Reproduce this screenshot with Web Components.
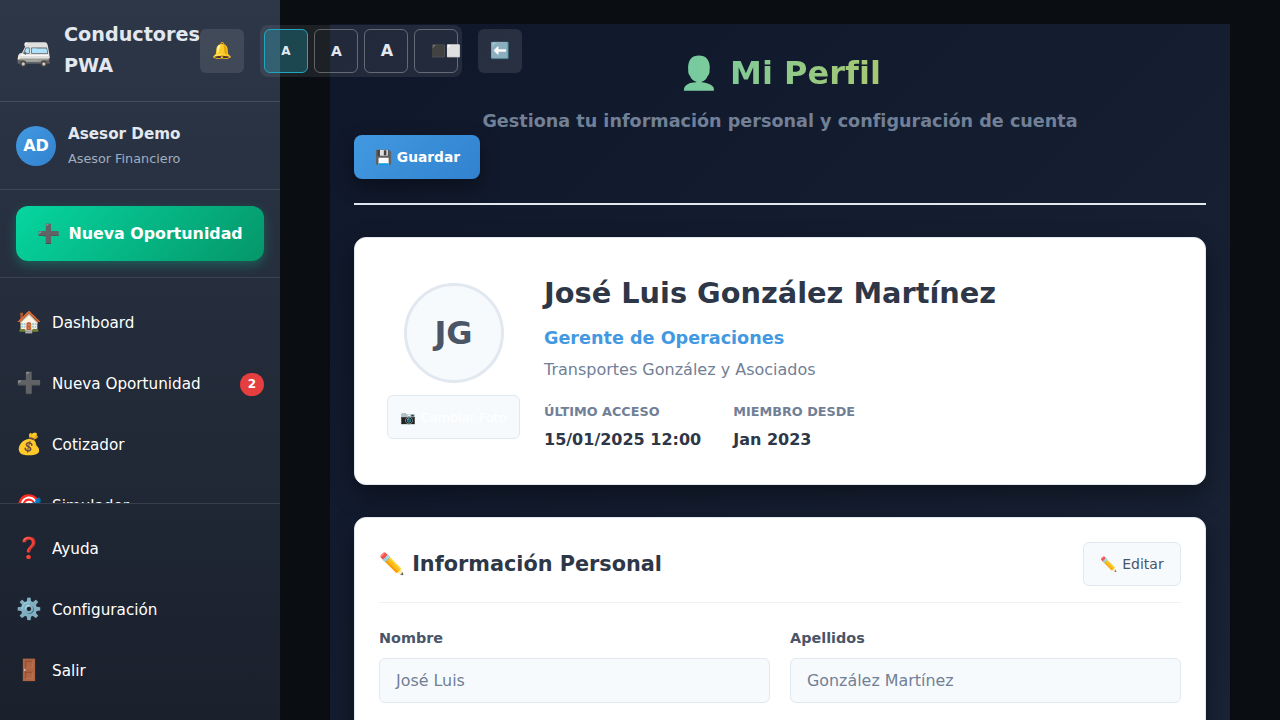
<!DOCTYPE html>
<html lang="es">
<head>
<meta charset="utf-8">
<title>Conductores PWA</title>
<style>
html,body{margin:0;height:100%;overflow:hidden}
body{font-family:"DejaVu Sans","Noto Color Emoji",sans-serif;font-size:16px;line-height:1.6;color:#e2e8f0;background:#0a0e12}
</style>
</head>
<body>
<app-shell>
  <side-bar slot="side"></side-bar>
  <profile-page></profile-page>
</app-shell>
<script>
const define=(name,html)=>{
  const t=document.createElement('template');
  t.innerHTML='<style>*{box-sizing:border-box}</style>'+html;
  customElements.define(name,class extends HTMLElement{
    constructor(){
      super();
      this.attachShadow({mode:'open'}).append(t.content.cloneNode(true));
    }
  });
};

define('app-shell',`<style>
:host{display:flex;height:720px;width:1280px;overflow:hidden;background:#0a0e12}
main{flex:1;min-width:0;padding:24px 50px 0;overflow:hidden}
</style><slot name="side"></slot><main><slot></slot></main>`);

define('tool-button',`<style>
:host{display:flex;align-items:center;justify-content:center;width:44px;height:44px;border-radius:6px;background:rgba(255,255,255,.1);font-size:16px;flex:none;box-sizing:border-box;white-space:nowrap}
</style><slot></slot>`);

define('size-button',`<style>
:host{display:flex;align-items:center;justify-content:center;width:44px;height:44px;border-radius:6px;border:1px solid rgba(255,255,255,.3);font-weight:700;flex:none;box-sizing:border-box;white-space:nowrap;padding-top:1px}
:host([active]){background:rgba(30,170,195,.28);border-color:#22a6bf}
</style><slot></slot>`);

define('nav-item',`<style>
:host{display:flex;align-items:center;height:57px;margin-bottom:4px;padding:0 16px;gap:12px;font-size:15.2px;color:#fff;box-sizing:border-box}
i{font-style:normal;font-size:20.8px;width:24px;display:flex;justify-content:center;padding-left:2px}
span{flex:1}
</style><i><slot name="icon"></slot></i><span><slot></slot></span><slot name="badge"></slot>`);

define('count-badge',`<style>
:host{display:block;min-width:24px;height:23px;border-radius:12px;background:#e53e3e;color:#fff;font-size:12px;font-weight:700;line-height:22px;text-align:center;padding:0 6px;box-sizing:border-box;margin-top:2px}
</style><slot></slot>`);

define('side-bar',`<style>
:host{display:flex;flex-direction:column;width:280px;height:720px;flex:none;background:linear-gradient(180deg,#2d3748,#1a202c);position:relative;z-index:2}
header{display:flex;align-items:center;padding:20px 16px;border-bottom:1px solid #434c5b;height:102.4px;flex:none}
.van{font-size:28.8px;width:36px;margin-right:12px;display:flex;justify-content:center;flex:none}
h1{margin:0;font-size:19.2px;line-height:30.72px;font-weight:700;width:136px;flex:none}
.tools{display:flex;align-items:center;gap:16px;flex:none}
.sizes{display:flex;gap:6px;padding:4px;border-radius:8px;background:rgba(255,255,255,.08);height:52px;width:202px}
.user{display:flex;align-items:center;gap:12px;padding:20px 16px;height:87.8px;border-bottom:1px solid #3e4757;flex:none}
.av{width:40px;height:40px;border-radius:50%;background:linear-gradient(135deg,#4299e1,#3182ce);display:flex;align-items:center;justify-content:center;color:#fff;font-weight:700}
.nm{font-size:15.2px;font-weight:700;margin-bottom:2px}
.rl{font-size:12.8px;color:#a0aec0}
.cta{padding:16px;border-bottom:1px solid #3b4453;flex:none;height:88px}
.cta div{height:55px;border-radius:12px;background:linear-gradient(135deg,#06d6a0,#059669);box-shadow:0 4px 12px rgba(6,214,160,.3);display:flex;align-items:center;justify-content:center;gap:8px;color:#fff;font-weight:700;font-size:15.85px}
.cta i{font-style:normal;font-size:18.6px;padding-top:1px}
nav{flex:1;min-height:0;overflow:hidden;padding-top:16px}
footer{flex:none;height:217px;border-top:1px solid #373e4c;padding-top:16.6px}
</style>
<header><span class="van">🚐</span><h1>Conductores PWA</h1>
<div class="tools"><tool-button>🔔</tool-button>
<div class="sizes"><size-button active style="font-size:12px">A</size-button><size-button style="font-size:14px;padding-left:1px">A</size-button><size-button style="font-size:16px;padding-left:2px">A</size-button><size-button style="font-size:12px;padding-left:20px;padding-top:2px">⬛⬜</size-button></div>
<tool-button>⬅️</tool-button></div></header>
<div class="user"><div class="av">AD</div><div><div class="nm">Asesor Demo</div><div class="rl">Asesor Financiero</div></div></div>
<div class="cta"><div><i>➕</i><span>Nueva Oportunidad</span></div></div>
<nav>
<nav-item><span slot="icon">🏠</span>Dashboard</nav-item>
<nav-item><span slot="icon">➕</span>Nueva Oportunidad<count-badge slot="badge">2</count-badge></nav-item>
<nav-item><span slot="icon">💰</span>Cotizador</nav-item>
<nav-item><span slot="icon">🎯</span>Simulador</nav-item>
</nav>
<footer>
<nav-item><span slot="icon">❓</span>Ayuda</nav-item>
<nav-item><span slot="icon">⚙️</span>Configuración</nav-item>
<nav-item><span slot="icon">🚪</span>Salir</nav-item>
</footer>`);

define('white-card',`<style>
:host{display:block;background:#fff;border:1px solid #e2e8f0;border-radius:12px;box-shadow:0 10px 25px rgba(0,0,0,.4);box-sizing:border-box;color:#2d3748}
</style><slot></slot>`);

define('soft-button',`<style>
:host{display:inline-flex;align-items:center;justify-content:center;height:44px;border:1px solid #e2e8f0;border-radius:6px;background:#f7fafc;box-sizing:border-box;white-space:pre;flex:none;padding-top:1px}
</style><slot></slot>`);

define('text-field',`<style>
:host{display:block}
label{display:block;font-size:14.4px;font-weight:700;color:#4a5568;line-height:23px;margin-bottom:8px}
div{height:45px;border:1px solid #e2e8f0;border-radius:6px;background:#f7fafc;padding:0 16px;line-height:43px;font-size:15.9px;color:#718096}
</style><label><slot name="label"></slot></label><div><slot></slot></div>`);

define('profile-page',`<style>
:host{display:block;height:1400px;background:linear-gradient(135deg,#0f172a,#1e293b);padding:24px;box-sizing:border-box}
header{height:157px;border-bottom:2px solid #e2e8f0;margin-bottom:32px;text-align:center}
h1{font-size:32px;line-height:50px;font-weight:700;width:max-content;margin:0 auto;background:linear-gradient(90deg,#74cba2,#a8c873);-webkit-background-clip:text;background-clip:text;color:transparent}
p{margin:9px 0 0;font-size:17.6px;line-height:28px;font-weight:700;color:#718096}
.save{display:flex;align-items:center;justify-content:center;width:126px;height:44px;padding:1px 0 0 1px;border-radius:8px;background:linear-gradient(135deg,#4299e1,#3182ce);box-shadow:0 8px 20px rgba(0,0,0,.4);font-size:13.8px;font-weight:700;color:#fff;white-space:pre}
.profile{height:248px;margin-bottom:32px;padding:32px;display:flex;gap:24px}
.pic{width:133px;display:flex;flex-direction:column;align-items:center;gap:12px;padding-top:13px}
.jg{width:100px;height:100px;border:3px solid #e2e8f0;border-radius:50%;background:#f7fafc;display:flex;align-items:center;justify-content:center;font-size:32px;font-weight:700;color:#4a5568;padding-top:1px}
.pic soft-button{width:133px;font-size:12.8px;color:#fff;padding-top:2px}
h2{margin:0;font-size:28.8px;line-height:46px;font-weight:700}
.job{margin-top:8px;font-size:17.6px;line-height:28px;font-weight:700;color:#4299e1}
.co{margin-top:5px;line-height:26px;color:#718096}
.meta{display:flex;gap:32px;margin-top:19px}
.meta b{display:block;font-size:12.8px;line-height:20px;color:#718096}
.meta strong{display:block;line-height:26px;margin-top:5px}
.info{padding:24px;min-height:420px}
.top{display:flex;justify-content:space-between;height:61px;border-bottom:1px solid #edf2f7;margin-bottom:24px}
h3{margin:0;font-size:20.8px;line-height:44px;font-weight:700}
.top soft-button{width:98px;font-size:14px;color:#4a5568}
.grid{display:grid;grid-template-columns:1fr 1fr;gap:20px}
</style>
<header><h1>👤 Mi Perfil</h1><p>Gestiona tu información personal y configuración de cuenta</p><div class="save">💾 Guardar</div></header>
<white-card class="profile"><div class="pic"><div class="jg">JG</div><soft-button>📷 Cambiar Foto</soft-button></div>
<div><h2>José Luis González Martínez</h2><div class="job">Gerente de Operaciones</div><div class="co">Transportes González y Asociados</div>
<div class="meta"><div><b>ÚLTIMO ACCESO</b><strong>15/01/2025 12:00</strong></div><div><b>MIEMBRO DESDE</b><strong>Jan 2023</strong></div></div></div></white-card>
<white-card class="info"><div class="top"><h3>✏️ Información Personal</h3><soft-button>✏️ Editar</soft-button></div>
<div class="grid"><text-field><span slot="label">Nombre</span>José Luis</text-field><text-field><span slot="label">Apellidos</span>González Martínez</text-field></div></white-card>`);
</script>
</body>
</html>
